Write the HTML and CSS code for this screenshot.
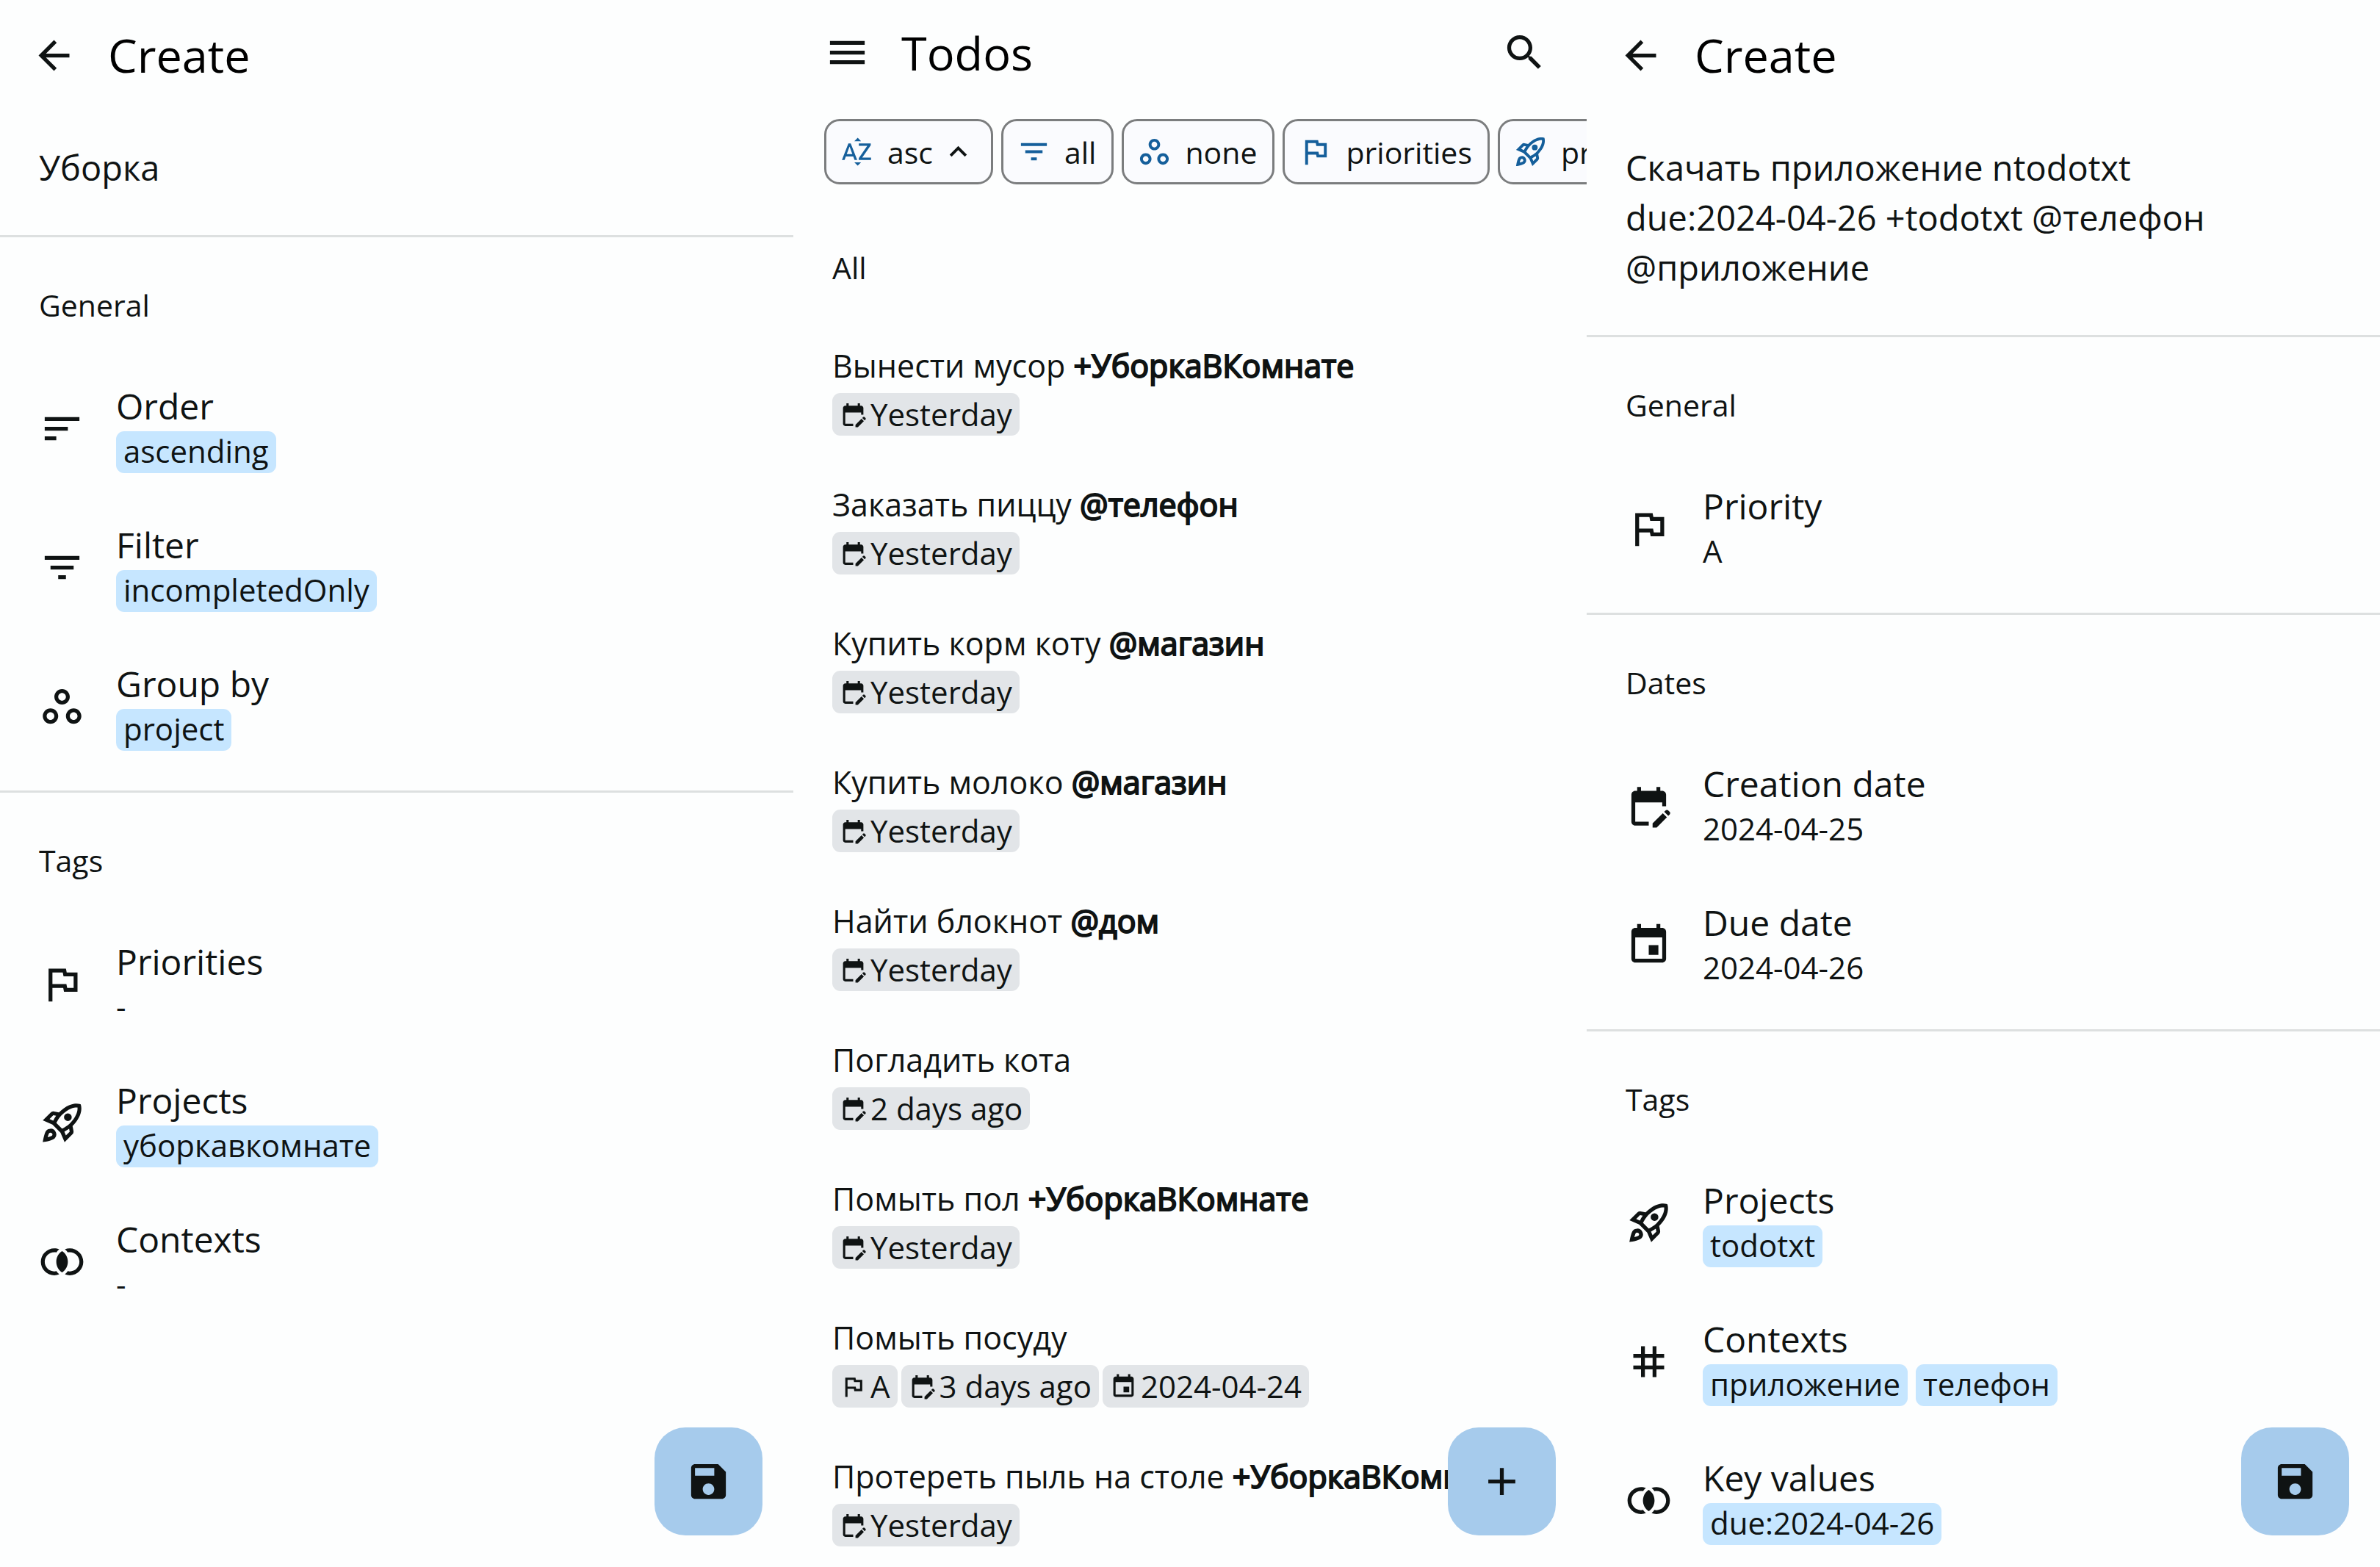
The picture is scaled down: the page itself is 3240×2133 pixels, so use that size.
FILE: index.html
```html
<!DOCTYPE html>
<html lang="en">
<head>
<meta charset="utf-8">
<meta name="viewport" content="width=device-width, initial-scale=1">
<title>Todos</title>
<link rel="stylesheet" href="styles.css">
</head>
<body>
<svg class="sprite" aria-hidden="true">
  <symbol id="back" viewBox="0 0 24 24"><path d="M20 11H7.83l5.59-5.59L12 4l-8 8 8 8 1.41-1.41L7.83 13H20v-2z"/></symbol>
  <symbol id="menu" viewBox="0 0 24 24"><path d="M3 18h18v-2H3v2zm0-5h18v-2H3v2zm0-7v2h18V6H3z"/></symbol>
  <symbol id="search" viewBox="0 0 24 24"><path d="M15.5 14h-.79l-.28-.27C15.41 12.59 16 11.11 16 9.5 16 5.91 13.09 3 9.5 3S3 5.91 3 9.5 5.91 16 9.5 16c1.61 0 3.09-.59 4.23-1.57l.27.28v.79l5 4.99L20.49 19l-4.99-5zm-6 0C7.01 14 5 11.99 5 9.5S7.01 5 9.5 5 14 7.01 14 9.5 11.99 14 9.5 14z"/></symbol>
  <symbol id="sort" viewBox="0 0 24 24"><path d="M3 18h6v-2H3v2zM3 6v2h18V6H3zm0 7h12v-2H3v2z"/></symbol>
  <symbol id="filter" viewBox="0 0 24 24"><path d="M10 18h4v-2h-4v2zM3 6v2h18V6H3zm3 7h12v-2H6v2z"/></symbol>
  <symbol id="group" viewBox="0 0 24 24"><path d="M6 15c1.1 0 2 .9 2 2s-.9 2-2 2-2-.9-2-2 .9-2 2-2m0-2c-2.2 0-4 1.8-4 4s1.8 4 4 4 4-1.8 4-4-1.8-4-4-4zm6-8c1.1 0 2 .9 2 2s-.9 2-2 2-2-.9-2-2 .9-2 2-2m0-2C9.8 3 8 4.8 8 7s1.8 4 4 4 4-1.8 4-4-1.8-4-4-4zm6 12c1.1 0 2 .9 2 2s-.9 2-2 2-2-.9-2-2 .9-2 2-2m0-2c-2.2 0-4 1.8-4 4s1.8 4 4 4 4-1.8 4-4-1.8-4-4-4z"/></symbol>
  <symbol id="flag" viewBox="0 0 24 24"><path d="M12.36 6l.4 2H18v6h-3.36l-.4-2H7V6h5.36M14 4H5v17h2v-7h5.6l.4 2h7V6h-5.6L14 4z"/></symbol>
  <symbol id="rocket" viewBox="0 0 24 24"><path fill-rule="evenodd" d="M6 15c-.83 0-1.58.34-2.12.88C2.7 17.06 2 22 2 22s4.94-.7 6.12-1.88A2.996 2.996 0 0 0 6 15zm.71 3.71c-.28.28-2.17.76-2.17.76s.47-1.88.76-2.17c.17-.19.42-.3.7-.3a1.003 1.003 0 0 1 .71 1.71zM17.42 13.65c6.36-6.36 4.24-11.31 4.24-11.31S16.71.22 10.35 6.58l-2.49-.5a2.03 2.03 0 0 0-1.81.55L2 10.69l5 2.14L11.17 17l2.14 5 4.05-4.05c.47-.47.68-1.15.55-1.81l-.49-2.49zM7.41 10.83l-1.91-.82 1.97-1.97 1.44.29c-.57.83-1.08 1.7-1.5 2.5zM13.99 18.5l-.82-1.91c.8-.42 1.67-.93 2.49-1.5l.29 1.44-1.96 1.97zM16 12.24c-1.32 1.32-3.38 2.4-4.04 2.73l-2.93-2.93c.32-.65 1.4-2.71 2.73-4.04 4.68-4.68 8.23-3.99 8.23-3.99s.69 3.55-3.99 8.23z"/><circle cx="15" cy="9" r="2"/></symbol>
  <symbol id="join" viewBox="0 0 24 24"><path d="M9.04 16.87c-.33.08-.68.13-1.04.13-2.76 0-5-2.24-5-5s2.24-5 5-5c.36 0 .71.05 1.04.13.39-.56.88-1.12 1.49-1.63C9.75 5.19 8.9 5 8 5c-3.86 0-7 3.14-7 7s3.14 7 7 7c.9 0 1.75-.19 2.53-.5-.61-.51-1.1-1.07-1.49-1.63zM16 5c-.9 0-1.75.19-2.53.5.61.51 1.1 1.07 1.49 1.63.33-.08.68-.13 1.04-.13 2.76 0 5 2.24 5 5s-2.24 5-5 5c-.36 0-.71-.05-1.04-.13-.39.56-.88 1.12-1.49 1.63.78.31 1.63.5 2.53.5 3.86 0 7-3.14 7-7s-3.14-7-7-7zM12 6.5c-1.95 1.2-3 3.3-3 5.5s1.05 4.3 3 5.5c1.95-1.2 3-3.3 3-5.5s-1.05-4.3-3-5.5z"/></symbol>
  <symbol id="save" viewBox="0 0 24 24"><path d="M17 3H5c-1.11 0-2 .9-2 2v14c0 1.1.89 2 2 2h14c1.1 0 2-.9 2-2V7l-4-4zm-5 16c-1.66 0-3-1.34-3-3s1.34-3 3-3 3 1.34 3 3-1.34 3-3 3zm3-10H5V5h10v4z"/></symbol>
  <symbol id="add" viewBox="0 0 24 24"><path d="M19 13h-6v6h-2v-6H5v-2h6V5h2v6h6v2z"/></symbol>
  <symbol id="hash" viewBox="0 0 24 24"><path d="M20 10V8h-4V4h-2v4h-4V4H8v4H4v2h4v4H4v2h4v4h2v-4h4v4h2v-4h4v-2h-4v-4h4zm-6 4h-4v-4h4v4z"/></symbol>
  <symbol id="created" viewBox="0 0 24 24"><path d="M12 22H5c-1.11 0-2-.9-2-2L3.01 6c0-1.1.88-2 1.99-2h1V2h2v2h8V2h2v2h1c1.1 0 2 .9 2 2v6h-2v-2H5v10h7v2zm10.13-5.01.71-.71c.39-.39.39-1.02 0-1.41l-.71-.71c-.39-.39-1.02-.39-1.41 0l-.71.71 2.12 2.12zm-.71.71-5.3 5.3H14v-2.12l5.3-5.3 2.12 2.12z"/></symbol>
  <symbol id="due" viewBox="0 0 24 24"><path d="M17 12h-5v5h5v-5zM16 1v2H8V1H6v2H5c-1.11 0-1.99.9-1.99 2L3 19c0 1.1.89 2 2 2h14c1.1 0 2-.9 2-2V5c0-1.1-.9-2-2-2h-1V1h-2zm3 18H5V8h14v11z"/></symbol>
  <symbol id="up" viewBox="0 0 24 24"><path d="M7.41 15.41L12 10.83l4.59 4.58L18 14l-6-6-6 6z"/></symbol>
  <symbol id="alpha" viewBox="0 0 24 24"><path d="M14.94 4.66h-4.72l2.36-2.36zM10.25 19.37h4.66l-2.33 2.33zM6.1 6.27L1.6 17.73h1.84l.92-2.45h5.11l.92 2.45h1.84L7.74 6.27H6.1zm-1.13 7.37l1.94-5.18 1.94 5.18H4.97zM15.73 16.14h6.12v1.59h-8.53v-1.29l5.92-8.56h-5.88v-1.6h8.3v1.26l-5.93 8.6z"/></symbol>
</svg>
<main class="screens">

  <section class="screen">
    <header class="bar">
      <button class="icon-button" type="button" aria-label="Back"><svg class="icon"><use href="#back"/></svg></button>
      <h1 class="bar-title">Create</h1>
    </header>
    <textarea class="field" rows="1" aria-label="Filter name">Уборка</textarea>
    <hr class="divider">
    <h2 class="heading">General</h2>
    <ul class="rows">
      <li><button class="row" type="button"><svg class="icon"><use href="#sort"/></svg><span class="row-text"><span class="row-title">Order</span><span class="tags"><span class="tag">ascending</span></span></span></button></li>
      <li><button class="row" type="button"><svg class="icon"><use href="#filter"/></svg><span class="row-text"><span class="row-title">Filter</span><span class="tags"><span class="tag">incompletedOnly</span></span></span></button></li>
      <li><button class="row" type="button"><svg class="icon"><use href="#group"/></svg><span class="row-text"><span class="row-title">Group by</span><span class="tags"><span class="tag">project</span></span></span></button></li>
    </ul>
    <hr class="divider">
    <h2 class="heading">Tags</h2>
    <ul class="rows">
      <li><button class="row" type="button"><svg class="icon"><use href="#flag"/></svg><span class="row-text"><span class="row-title">Priorities</span><span class="row-value">-</span></span></button></li>
      <li><button class="row" type="button"><svg class="icon"><use href="#rocket"/></svg><span class="row-text"><span class="row-title">Projects</span><span class="tags"><span class="tag">уборкавкомнате</span></span></span></button></li>
      <li><button class="row" type="button"><svg class="icon"><use href="#join"/></svg><span class="row-text"><span class="row-title">Contexts</span><span class="row-value">-</span></span></button></li>
    </ul>
    <button class="fab" type="button" aria-label="Save"><svg class="icon"><use href="#save"/></svg></button>
  </section>

  <section class="screen">
    <header class="bar bar-list">
      <button class="icon-button" type="button" aria-label="Menu"><svg class="icon"><use href="#menu"/></svg></button>
      <h1 class="bar-title">Todos</h1>
      <button class="icon-button" type="button" aria-label="Search"><svg class="icon"><use href="#search"/></svg></button>
    </header>
    <div class="chips">
      <button class="chip" type="button"><svg class="chip-icon"><use href="#alpha"/></svg>asc<svg class="chip-caret"><use href="#up"/></svg></button>
      <button class="chip" type="button"><svg class="chip-icon"><use href="#filter"/></svg>all</button>
      <button class="chip" type="button"><svg class="chip-icon"><use href="#group"/></svg>none</button>
      <button class="chip" type="button"><svg class="chip-icon"><use href="#flag"/></svg>priorities</button>
      <button class="chip" type="button"><svg class="chip-icon"><use href="#rocket"/></svg>projects</button>
    </div>
    <h2 class="heading">All</h2>
    <ul class="rows">
      <li class="todo"><span class="todo-text">Вынести мусор <b>+УборкаВКомнате</b></span><span class="badges"><span class="badge"><svg class="badge-icon"><use href="#created"/></svg>Yesterday</span></span></li>
      <li class="todo"><span class="todo-text">Заказать пиццу <b>@телефон</b></span><span class="badges"><span class="badge"><svg class="badge-icon"><use href="#created"/></svg>Yesterday</span></span></li>
      <li class="todo"><span class="todo-text">Купить корм коту <b>@магазин</b></span><span class="badges"><span class="badge"><svg class="badge-icon"><use href="#created"/></svg>Yesterday</span></span></li>
      <li class="todo"><span class="todo-text">Купить молоко <b>@магазин</b></span><span class="badges"><span class="badge"><svg class="badge-icon"><use href="#created"/></svg>Yesterday</span></span></li>
      <li class="todo"><span class="todo-text">Найти блокнот <b>@дом</b></span><span class="badges"><span class="badge"><svg class="badge-icon"><use href="#created"/></svg>Yesterday</span></span></li>
      <li class="todo"><span class="todo-text">Погладить кота</span><span class="badges"><span class="badge"><svg class="badge-icon"><use href="#created"/></svg>2 days ago</span></span></li>
      <li class="todo"><span class="todo-text">Помыть пол <b>+УборкаВКомнате</b></span><span class="badges"><span class="badge"><svg class="badge-icon"><use href="#created"/></svg>Yesterday</span></span></li>
      <li class="todo"><span class="todo-text">Помыть посуду</span><span class="badges"><span class="badge"><svg class="badge-icon"><use href="#flag"/></svg>A</span><span class="badge"><svg class="badge-icon"><use href="#created"/></svg>3 days ago</span><span class="badge"><svg class="badge-icon"><use href="#due"/></svg>2024-04-24</span></span></li>
      <li class="todo"><span class="todo-text">Протереть пыль на столе <b>+УборкаВКомнате</b></span><span class="badges"><span class="badge"><svg class="badge-icon"><use href="#created"/></svg>Yesterday</span></span></li>
    </ul>
    <button class="fab" type="button" aria-label="Add todo"><svg class="icon"><use href="#add"/></svg></button>
  </section>

  <section class="screen">
    <header class="bar">
      <button class="icon-button" type="button" aria-label="Back"><svg class="icon"><use href="#back"/></svg></button>
      <h1 class="bar-title">Create</h1>
    </header>
    <textarea class="field" rows="3" aria-label="Todo">Скачать приложение ntodotxt
due:2024-04-26 +todotxt @телефон
@приложение</textarea>
    <hr class="divider">
    <h2 class="heading">General</h2>
    <ul class="rows">
      <li><button class="row" type="button"><svg class="icon"><use href="#flag"/></svg><span class="row-text"><span class="row-title">Priority</span><span class="row-value">A</span></span></button></li>
    </ul>
    <hr class="divider">
    <h2 class="heading">Dates</h2>
    <ul class="rows">
      <li><button class="row" type="button"><svg class="icon"><use href="#created"/></svg><span class="row-text"><span class="row-title">Creation date</span><span class="row-value">2024-04-25</span></span></button></li>
      <li><button class="row" type="button"><svg class="icon"><use href="#due"/></svg><span class="row-text"><span class="row-title">Due date</span><span class="row-value">2024-04-26</span></span></button></li>
    </ul>
    <hr class="divider">
    <h2 class="heading">Tags</h2>
    <ul class="rows">
      <li><button class="row" type="button"><svg class="icon"><use href="#rocket"/></svg><span class="row-text"><span class="row-title">Projects</span><span class="tags"><span class="tag">todotxt</span></span></span></button></li>
      <li><button class="row" type="button"><svg class="icon"><use href="#hash"/></svg><span class="row-text"><span class="row-title">Contexts</span><span class="tags"><span class="tag">приложение</span><span class="tag">телефон</span></span></span></button></li>
      <li><button class="row" type="button"><svg class="icon"><use href="#join"/></svg><span class="row-text"><span class="row-title">Key values</span><span class="tags"><span class="tag">due:2024-04-26</span></span></span></button></li>
    </ul>
    <button class="fab" type="button" aria-label="Save"><svg class="icon"><use href="#save"/></svg></button>
  </section>

</main>
</body>
</html>
```
FILE: styles.css
```css
:root {
  --surface: #fdfefe;
  --ink: #0f1313;
  --line: #dde0e0;
  --tag: #c6e6ff;
  --badge: #e2e5e8;
  --fab: #a6cbec;
  --accent: #155f9b;
}

* { box-sizing: border-box; }

body {
  margin: 0;
  background: var(--surface);
  color: var(--ink);
  font: 400 41px/58px "Open Sans", "Noto Sans", sans-serif;
}

button, textarea {
  margin: 0;
  padding: 0;
  border: 0;
  background: none;
  color: inherit;
  font: inherit;
  text-align: left;
}

svg { display: block; flex: none; fill: currentColor; }

.sprite { display: none; }

.screens {
  display: grid;
  grid-template-columns: repeat(3, minmax(0, 1fr));
  height: 100vh;
}

.screen {
  position: relative;
  overflow: hidden;
}

/* Top bar */
.bar {
  display: flex;
  align-items: center;
  gap: 42px;
  height: 150px;
  padding: 0 53px 0 42px;
}

.bar-list { height: 143px; }

.bar-title {
  flex: 1;
  margin: 0;
  color: #000;
  font-size: 63px;
  font-weight: 400;
  line-height: 80px;
}

.icon { width: 63px; height: 63px; }

/* Form screens */
.field {
  display: block;
  width: 100%;
  padding: 44px 63px 38px 53px;
  font-size: 47px;
  line-height: 68px;
  resize: none;
  overflow: hidden;
  outline: 0;
}

.divider {
  height: 3px;
  margin: 20px 0 19px;
  border: 0;
  background: var(--line);
}

.heading {
  margin: 0;
  padding: 45px 53px;
  font-size: 41px;
  font-weight: 400;
  line-height: 57px;
}

.rows { margin: 0; padding: 0; list-style: none; }

.row {
  display: flex;
  align-items: center;
  gap: 42px;
  width: 100%;
  height: 189px;
  padding: 0 53px;
}

.row-text { display: grid; padding-bottom: 6px; }

.row-title { font-size: 48px; line-height: 69px; }

.row-value, .tag { font-size: 42px; line-height: 54px; }

.tags { display: flex; gap: 11px; }

.tag {
  padding: 0 10px 3px;
  border-radius: 11px;
  background: var(--tag);
}

.row-value { padding-bottom: 3px; }

/* Todo list */
.chips {
  display: flex;
  gap: 11px;
  padding: 19px 0 40px 42px;
}

.chip {
  display: flex;
  flex: none;
  align-items: center;
  height: 89px;
  padding: 0 21px 0 18px;
  border: 3px solid #7b7d7e;
  border-radius: 21px;
  background: #fafbfe;
}

.chip-icon {
  width: 47px;
  height: 47px;
  margin-right: 18px;
  color: var(--accent);
}

.chip-caret { width: 47px; height: 47px; margin-left: 11px; }

.todo {
  display: grid;
  gap: 8px;
  height: 189px;
  padding: 31px 0 34px 53px;
}

.todo-text { font-size: 43px; white-space: nowrap; }

.todo-text b { font-weight: 400; -webkit-text-stroke: 2px currentColor; }

.badges { display: flex; gap: 5px; }

.badge {
  display: flex;
  align-items: center;
  gap: 5px;
  padding: 0 10px;
  border-radius: 11px;
  background: var(--badge);
  font-size: 42px;
}

.badge-icon { width: 37px; height: 37px; }

/* Floating action button */
.fab {
  position: absolute;
  right: 42px;
  bottom: 43px;
  display: grid;
  place-items: center;
  width: 147px;
  height: 147px;
  border-radius: 42px;
  background: var(--fab);
}
```
